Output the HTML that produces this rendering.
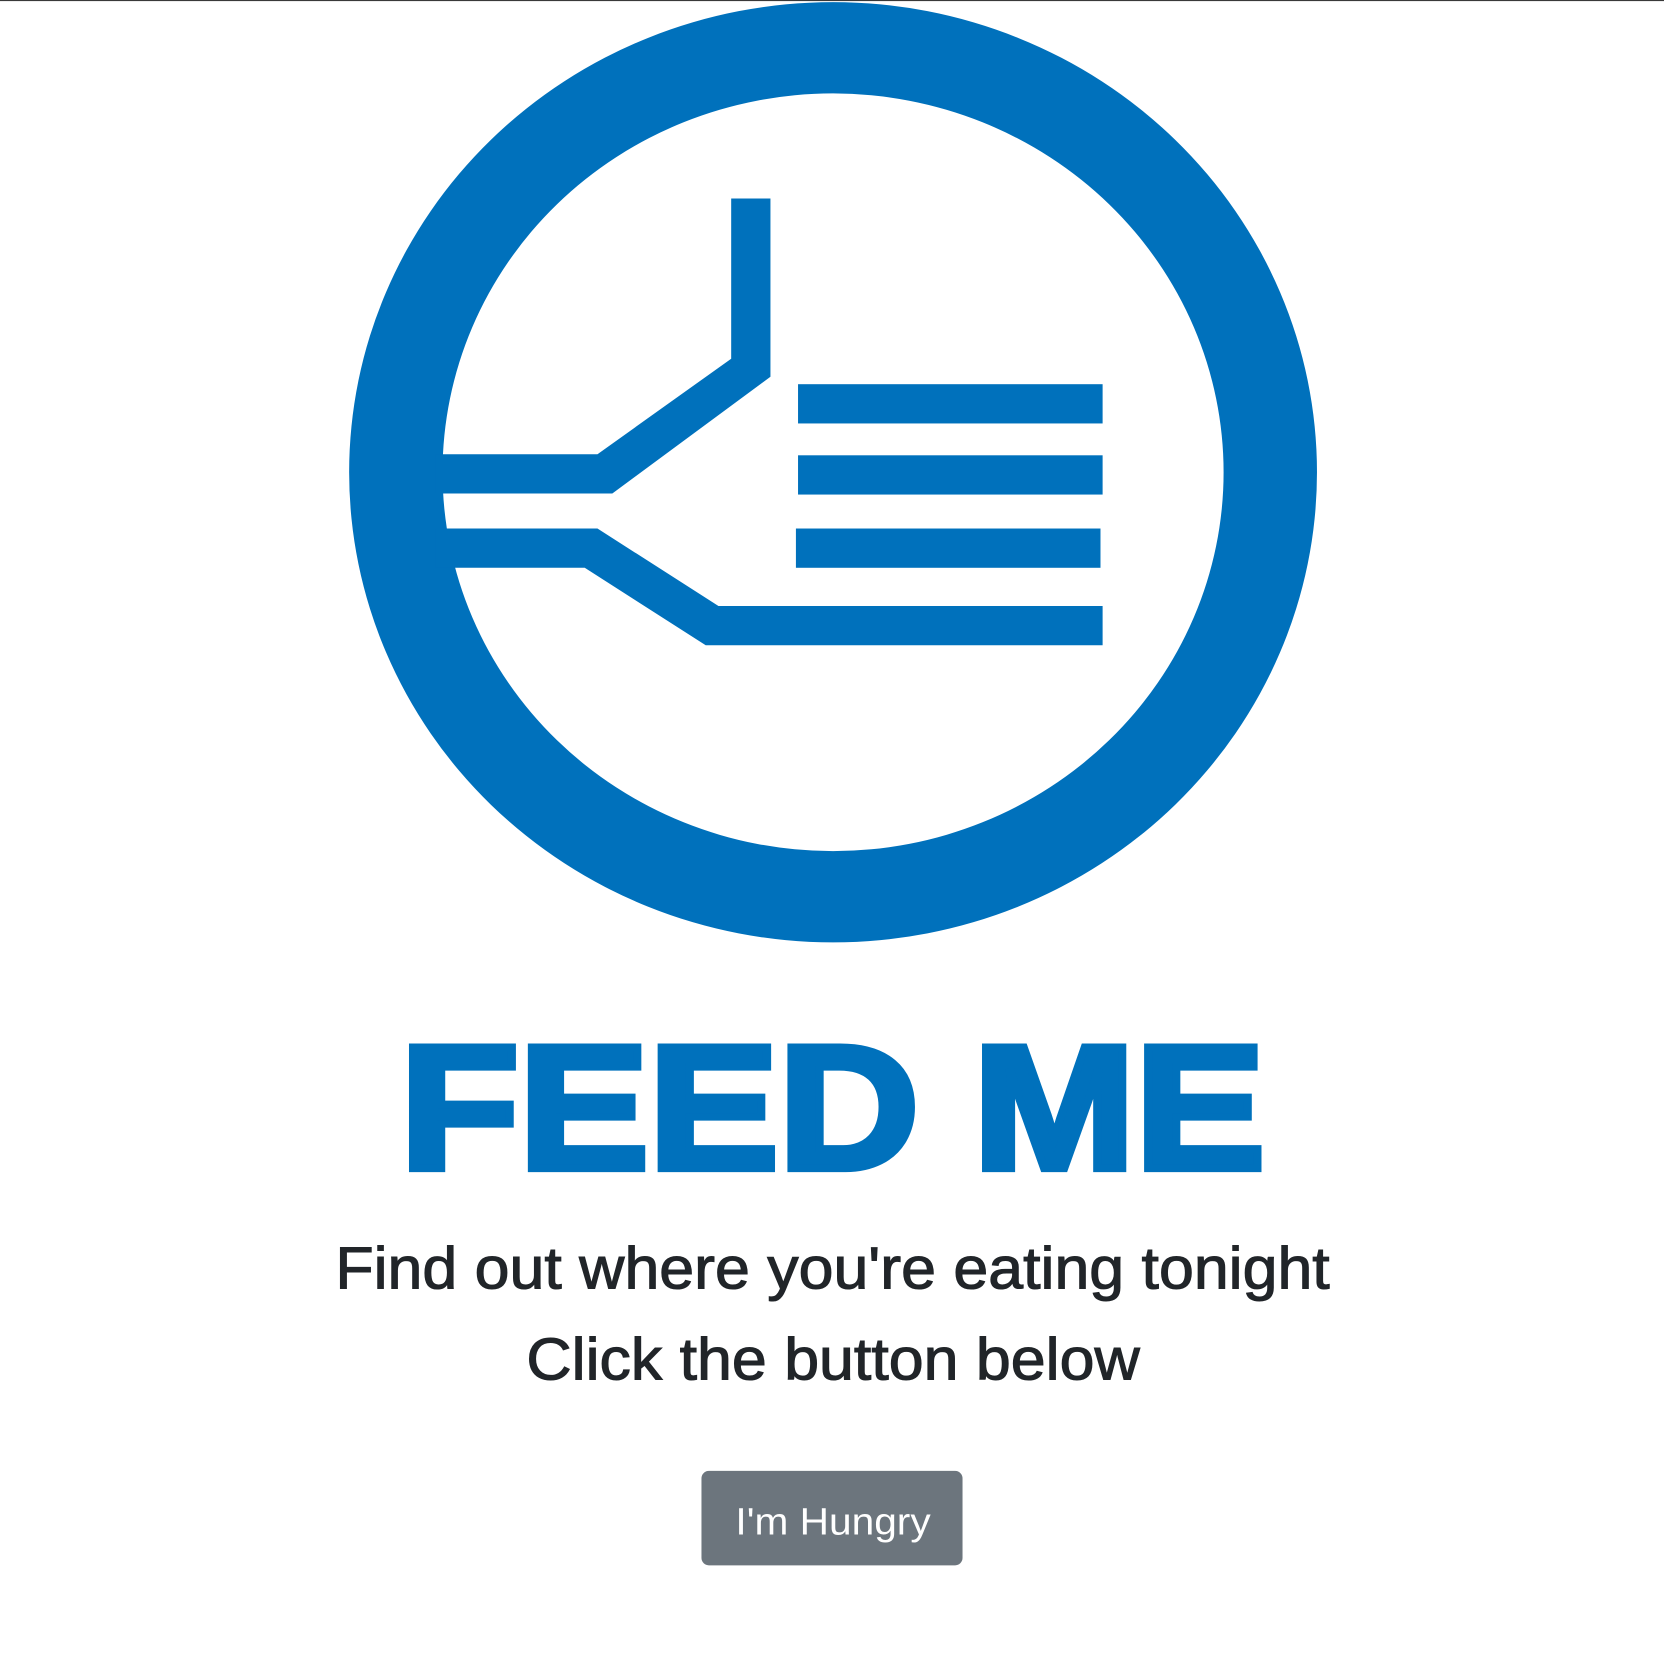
<!DOCTYPE html>
<html><head><meta charset="utf-8"><style>
html,body{margin:0;padding:0;background:#fff;overflow:hidden}
svg{display:block}
</style></head><body>
<svg width="1664" height="1663" viewBox="0 0 1568 1567" xmlns="http://www.w3.org/2000/svg">
<rect x="0" y="0" width="1568" height="1" fill="#333"/>
<path fill="#0071bc" fill-rule="evenodd" d="M329,445 A456,443 0 1,0 1241,445 A456,443 0 1,0 329,445 Z M417,445 A368,357 0 1,0 1153,445 A368,357 0 1,0 417,445 Z"/>
<polygon fill="#0071bc" points="689,187 726,187 726,355 577,465 410,465 410,428 563,428 689,338"/>
<polygon fill="#0071bc" points="410,498 563,498 677,571 1039,571 1039,608 665,608 551,535 410,535"/>
<rect fill="#0071bc" x="752" y="362" width="287" height="37"/>
<rect fill="#0071bc" x="752" y="429" width="287" height="37"/>
<rect fill="#0071bc" x="750" y="498" width="287" height="37"/>
<text x="377" y="1101" font-family="Liberation Sans, Arial, sans-serif" font-weight="bold" font-size="166" fill="#0071bc" stroke="#0071bc" stroke-width="7" stroke-linejoin="miter" textLength="815" lengthAdjust="spacingAndGlyphs">FEED ME</text>
<text x="316" y="1214" font-family="Liberation Sans, sans-serif" font-size="56" fill="#212529" stroke="#212529" stroke-width="1" textLength="937" lengthAdjust="spacingAndGlyphs">Find out where you're eating tonight</text>
<text x="496" y="1300" font-family="Liberation Sans, sans-serif" font-size="56" fill="#212529" stroke="#212529" stroke-width="1" textLength="578" lengthAdjust="spacingAndGlyphs">Click the button below</text>
<rect x="661" y="1386" width="246" height="89" rx="7" fill="#6c757d"/>
<text x="693" y="1446" font-family="Liberation Sans, sans-serif" font-size="36" fill="#fff" textLength="184" lengthAdjust="spacingAndGlyphs">I'm Hungry</text>
</svg>
</body></html>
